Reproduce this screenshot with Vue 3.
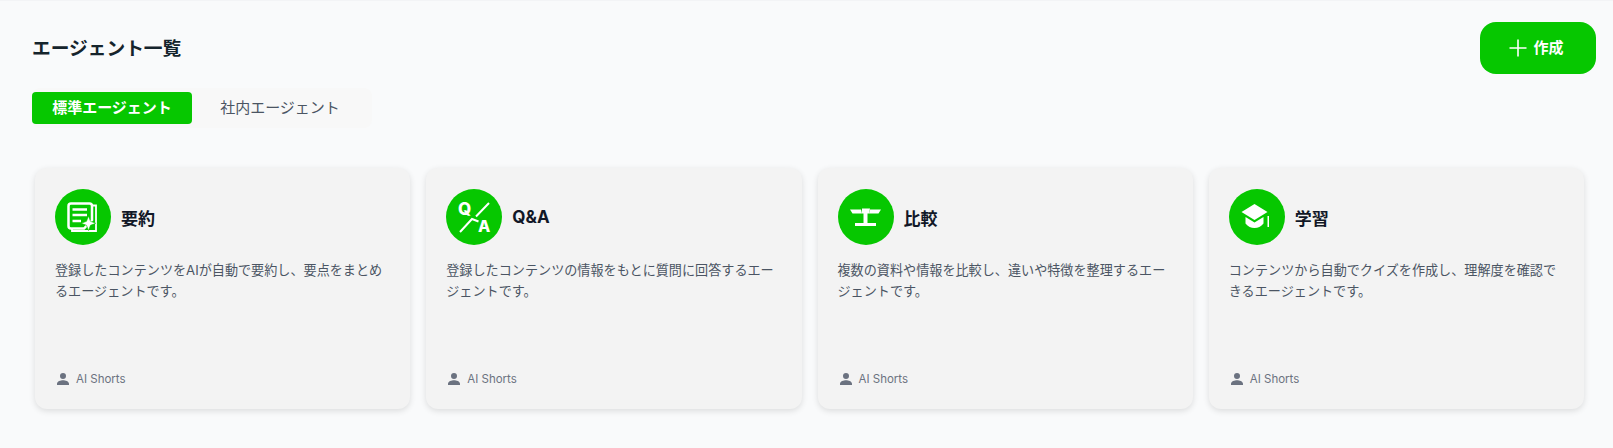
<template>
  <div class="page">
    <div class="header">
      <h1 class="title">エージェント一覧</h1>
      <button class="create-btn">
        <svg class="plus" viewBox="0 0 18 18" width="18" height="18"><path d="M9 0.500v17M0.500 9h17" stroke="#fff" stroke-width="1.600" fill="none" /></svg>
        <span>作成</span>
      </button>
    </div>
    <div class="tabs">
      <div v-for="(tab, i) in tabs" :key="tab" class="tab" :class="{ active: i === 0 }">{{ tab }}</div>
    </div>
    <div class="cards">
      <div v-for="agent in agents" :key="agent.name" class="card">
        <div class="card-head">
          <div class="icon">
            <svg v-if="agent.icon === 'summary'" viewBox="0 0 56 56" width="56" height="56" fill="none" stroke="#fff">
              <path d="M37.500 16.500h3.500v25.500H17v-2" stroke-width="1.800" />
              <path d="M16 14.500h18.500a2.500 2.500 0 0 1 2.500 2.500v14l-8 8.500H16a2.500 2.500 0 0 1-2.500-2.500v-20a2.500 2.500 0 0 1 2.500-2.500z" stroke-width="2.500" />
              <path d="M17.500 20.500h14.500M17.500 26h14.500M17.500 32h8.500" stroke-width="2.500" />
              <path d="M33.500 27l2 5.300 5.300 2-5.300 2-2 5.300-2-5.300-5.300-2 5.300-2z" fill="#fff" stroke="#06c700" stroke-width="0.600" />
            </svg>
            <svg v-else-if="agent.icon === 'qa'" viewBox="0 0 56 56" width="56" height="56" fill="none" stroke="#fff">
              <path d="M14 43l12-13 6.500 2.500M43 14l-13 13.500" stroke-width="2" />
              <text x="12" y="26" class="qa-letter">Q</text>
              <text x="32" y="43" class="qa-letter small">A</text>
            </svg>
            <svg v-else-if="agent.icon === 'compare'" viewBox="0 0 56 56" width="56" height="56" fill="#fff">
              <path d="M12 20.500h11l1 4h-9.500zM43 20.500h-11l-1 4h9.500z" />
              <path d="M24 19.500h8l-1 5h-1.500v9.500h8.500v3h-21v-3h8.500v-9.500h-1.500z" />
            </svg>
            <svg v-else viewBox="0 0 56 56" width="56" height="56" fill="#fff">
              <path d="M25.500 15l13 8-13 8-13-8z" />
              <path d="M16.500 28l9 5.500 9-5.500v6.500c-2.500 3-5.500 4.500-9 4.500s-6.500-1.500-9-4.500z" />
              <path d="M38.500 27h1.500v11h-1.500z" />
            </svg>
          </div>
          <div class="card-name">{{ agent.name }}</div>
        </div>
        <p class="desc">{{ agent.desc }}</p>
        <div class="owner">
          <svg viewBox="0 0 24 24" width="16" height="16" fill="#6b7280"><path d="M12 12a4.500 4.500 0 1 0 0-9 4.500 4.500 0 0 0 0 9zm0 2c-3.500 0-9 1.700-9 5.200V21h18v-1.800c0-3.500-5.500-5.200-9-5.200z" /></svg>
          <span>AI Shorts</span>
        </div>
      </div>
    </div>
  </div>
</template>

<script setup>
const tabs = ['標準エージェント', '社内エージェント']

const agents = [
  { name: '要約', icon: 'summary', desc: '登録したコンテンツをAIが自動で要約し、要点をまとめるエージェントです。' },
  { name: 'Q&A', icon: 'qa', desc: '登録したコンテンツの情報をもとに質問に回答するエージェントです。' },
  { name: '比較', icon: 'compare', desc: '複数の資料や情報を比較し、違いや特徴を整理するエージェントです。' },
  { name: '学習', icon: 'study', desc: 'コンテンツから自動でクイズを作成し、理解度を確認できるエージェントです。' },
]
</script>

<style>
html,
body {
  margin: 0;
  background: #f9fafb;
}
</style>

<style scoped>
.page {
  box-sizing: border-box;
  height: 448px;
  padding: 21px 17px 0 32px;
  background: #f9fafb;
  border-top: 1px solid #f3f4f6;
  font-family: Inter, "Noto Sans CJK JP", sans-serif;
  overflow: hidden;
}

.header {
  display: flex;
  justify-content: space-between;
  align-items: flex-start;
}

.title {
  margin: 0;
  padding-top: 13px;
  font-size: 18.72px;
  line-height: 28px;
  font-weight: 700;
  color: #15242c;
}

.create-btn {
  display: flex;
  align-items: center;
  justify-content: center;
  gap: 6px;
  width: 116px;
  height: 52px;
  padding: 0 3px 0 0;
  border: none;
  border-radius: 16px;
  background: #06c700;
  color: #fff;
  font-family: inherit;
  font-size: 15px;
  font-weight: 700;
}

.create-btn span {
  padding-bottom: 4px;
}

.tabs {
  display: flex;
  gap: 8px;
  width: 340px;
  height: 40px;
  margin-top: 14px;
  padding: 4px 0;
  box-sizing: border-box;
  background: #f8f8f8;
  border-radius: 8px;
}

.tab {
  width: 160px;
  height: 32px;
  line-height: 31px;
  text-align: center;
  font-size: 15px;
  color: #4b5563;
  border-radius: 4px;
}

.tab.active {
  background: #06c700;
  color: #fff;
  font-weight: 700;
}

.cards {
  display: grid;
  grid-template-columns: repeat(4, 375.25px);
  gap: 16px;
  margin-top: 40px;
  margin-left: 3px;
}

.card {
  box-sizing: border-box;
  display: flex;
  flex-direction: column;
  height: 241px;
  padding: 21px 20px 22px;
  background: #f3f3f3;
  border-radius: 12px;
  box-shadow: 0 2px 6px rgba(0, 0, 0, 0.12);
}

.card-head {
  display: flex;
  align-items: center;
  gap: 10px;
}

.icon {
  width: 56px;
  height: 56px;
  border-radius: 50%;
  background: #06c700;
  flex-shrink: 0;
}

.icon svg {
  display: block;
}

.qa-letter {
  font-family: Inter, sans-serif;
  font-size: 17px;
  font-weight: 800;
  fill: #fff;
  stroke: none;
}

.qa-letter.small {
  font-size: 16px;
}

.card-name {
  font-size: 17px;
  font-weight: 700;
  color: #111827;
}

.desc {
  margin: 15px 0 0;
  font-size: 13.120px;
  line-height: 21px;
  color: #4b5563;
}

.owner {
  display: flex;
  align-items: center;
  gap: 5px;
  margin-top: auto;
  font-size: 11.500px;
  color: #6b7280;
}
</style>
